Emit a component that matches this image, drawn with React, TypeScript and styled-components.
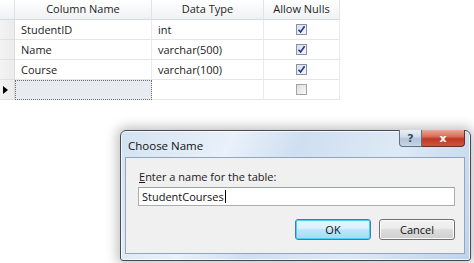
import React from "react";
import styled, { createGlobalStyle } from "styled-components";

const Global = createGlobalStyle`
  html, body { margin: 0; padding: 0; background: #ffffff; }
  body { font-family: "Open Sans", "Noto Sans", sans-serif; }
`;

const Page = styled.div`
  position: relative;
  width: 474px;
  height: 263px;
  overflow: hidden;
  background: #fff;
`;

const Grid = styled.div`
  display: grid;
  grid-template-columns: 15px 137px 112px 76px;
  grid-auto-rows: 20px;
  grid-template-rows: 20px;
  width: 340px;
  font-size: 11px;
  color: #1b1b1b;
`;

const HeadCell = styled.div`
  display: flex;
  align-items: center;
  justify-content: center;
  background: linear-gradient(#ffffff, #eff1f3);
  border-right: 1px solid #e2e3e6;
  border-bottom: 1px solid #d8dadd;
  box-sizing: border-box;
  color: #1e1e1e;
  padding-bottom: 3px;
`;

const Selector = styled.div`
  display: flex;
  align-items: center;
  justify-content: center;
  background: linear-gradient(90deg, #f3f3f3, #ececec);
  border-right: 1px solid #dcdcdc;
  border-bottom: 1px solid #e0e0e0;
  box-sizing: border-box;
`;

const Cell = styled.div<{ $center?: boolean }>`
  display: flex;
  align-items: center;
  justify-content: ${(p) => (p.$center ? "center" : "flex-start")};
  padding-left: ${(p) => (p.$center ? "0" : "6px")};
  border-right: 1px solid #ebebeb;
  border-bottom: 1px solid #e6e6e6;
  box-sizing: border-box;
  white-space: nowrap;
`;

const EditCell = styled.div`
  background: #e8ecf1;
  border: 1px dotted #6d6d6d;
  box-sizing: border-box;
`;

const Arrow = styled.div`
  width: 0;
  height: 0;
  border-top: 4px solid transparent;
  border-bottom: 4px solid transparent;
  border-left: 5px solid #000;
  margin-right: 3px;
`;

const Check = styled.div<{ $on?: boolean }>`
  width: 11px;
  height: 11px;
  box-sizing: border-box;
  border: 1px solid ${(p) => (p.$on ? "#8a93a6" : "#a3a3a3")};
  background: ${(p) =>
    p.$on ? "linear-gradient(135deg, #d9deea, #f4f6fa)" : "linear-gradient(135deg, #dedede, #f8f8f8)"};
  display: flex;
  align-items: center;
  justify-content: center;
`;

const Dialog = styled.div`
  position: absolute;
  left: 120px;
  top: 130px;
  width: 351px;
  height: 131px;
  box-sizing: border-box;
  border: 1px solid #434b57;
  border-radius: 6px 6px 3px 3px;
  background: linear-gradient(115deg, #d3e2f2 0%, #e9f1fa 28%, #cfdff1 45%, #dde9f6 70%, #bed3eb 100%);
  box-shadow: 0 0 12px 3px rgba(0, 0, 0, 0.25), inset 0 0 0 1px rgba(255, 255, 255, 0.75);
  display: flex;
  flex-direction: column;
  padding: 0 5px 6px 4px;
  font-size: 11px;
  color: #000;
`;

const TitleBar = styled.div`
  display: flex;
  justify-content: space-between;
  align-items: flex-start;
  height: 26px;
`;

const Title = styled.div`
  padding: 7px 0 0 3px;
  font-size: 11.5px;
  color: #111;
`;

const Caption = styled.div`
  display: flex;
  flex: none;
  height: 17px;
  margin-top: -1px;
`;

const HelpButton = styled.div`
  flex: none;
  width: 23px;
  height: 17px;
  box-sizing: border-box;
  border: 1px solid #5f6f84;
  border-top: 0;
  border-radius: 0 0 0 4px;
  background: linear-gradient(#eaf0f6 0%, #d0dce9 42%, #b3c4d8 55%, #c8d6e6 100%);
  display: flex;
  align-items: center;
  justify-content: center;
  font: bold 11px "DejaVu Sans", sans-serif;
  color: #3a4b61;
`;

const CloseButton = styled.div`
  flex: none;
  width: 43px;
  height: 17px;
  box-sizing: border-box;
  border: 1px solid #6e2c22;
  border-top: 0;
  border-left: 0;
  border-radius: 0 0 4px 0;
  background: linear-gradient(#eaa896 0%, #d86a55 42%, #bf3826 55%, #cc553f 100%);
  display: flex;
  align-items: center;
  justify-content: center;
  font: bold 11px "DejaVu Sans", sans-serif;
  color: #ffffff;
`;

const Panel = styled.div`
  flex: 1;
  background: #f0f0f0;
  border: 1px solid #93a6bc;
  display: flex;
  flex-direction: column;
  padding: 11px 9px 0 12px;
`;

const Label = styled.div`
  height: 15px;
  line-height: 15px;
  margin-left: 1px;
  color: #1a1a1a;
  u { text-decoration: underline; }
`;

const Input = styled.div`
  margin-top: 3px;
  height: 19px;
  box-sizing: border-box;
  border: 1px solid #abadb3;
  border-top-color: #9ea3ab;
  background: #fff;
  display: flex;
  align-items: center;
  padding-left: 3px;
  color: #111;
`;

const Caret = styled.span`
  display: inline-block;
  width: 1px;
  height: 13px;
  background: #000;
  margin-left: 1px;
`;

const Buttons = styled.div`
  display: flex;
  justify-content: flex-end;
  gap: 8px;
  margin-top: 13px;
`;

const Button = styled.div<{ $default?: boolean }>`
  width: 76px;
  height: 21px;
  box-sizing: border-box;
  border-radius: 3px;
  border: 1px solid ${(p) => (p.$default ? "#3c7fb1" : "#707070")};
  background: ${(p) =>
    p.$default
      ? "linear-gradient(#eaf6fd 0%, #d9f0fc 45%, #bee6fd 50%, #a7d9f5 100%)"
      : "linear-gradient(#f2f2f2 0%, #ebebeb 45%, #dddddd 50%, #cfcfcf 100%)"};
  box-shadow: ${(p) => (p.$default ? "inset 0 0 0 1px #48d1f8" : "inset 0 0 0 1px #fcfcfc")};
  display: flex;
  align-items: center;
  justify-content: center;
  color: #111;
`;

const rows = [
  { name: "StudentID", type: "int" },
  { name: "Name", type: "varchar(500)" },
  { name: "Course", type: "varchar(100)" },
];

const Tick = () => (
  <svg width="9" height="9" viewBox="0 0 9 9">
    <path d="M1.5 4.8 L3.6 7 L7.6 1.2" fill="none" stroke="#1f3a8a" strokeWidth="1.6" />
  </svg>
);

export default function App() {
  return (
    <Page>
      <Global />
      <Grid>
        <HeadCell />
        <HeadCell>Column Name</HeadCell>
        <HeadCell>Data Type</HeadCell>
        <HeadCell>Allow Nulls</HeadCell>
        {rows.map((r) => (
          <React.Fragment key={r.name}>
            <Selector />
            <Cell>{r.name}</Cell>
            <Cell>{r.type}</Cell>
            <Cell $center>
              <Check $on>
                <Tick />
              </Check>
            </Cell>
          </React.Fragment>
        ))}
        <Selector>
          <Arrow />
        </Selector>
        <EditCell />
        <Cell />
        <Cell $center>
          <Check />
        </Cell>
      </Grid>

      <Dialog>
        <TitleBar>
          <Title>Choose Name</Title>
          <Caption>
            <HelpButton>?</HelpButton>
            <CloseButton>x</CloseButton>
          </Caption>
        </TitleBar>
        <Panel>
          <Label>
            <u>E</u>nter a name for the table:
          </Label>
          <Input>
            StudentCourses
            <Caret />
          </Input>
          <Buttons>
            <Button $default>OK</Button>
            <Button>Cancel</Button>
          </Buttons>
        </Panel>
      </Dialog>
    </Page>
  );
}
